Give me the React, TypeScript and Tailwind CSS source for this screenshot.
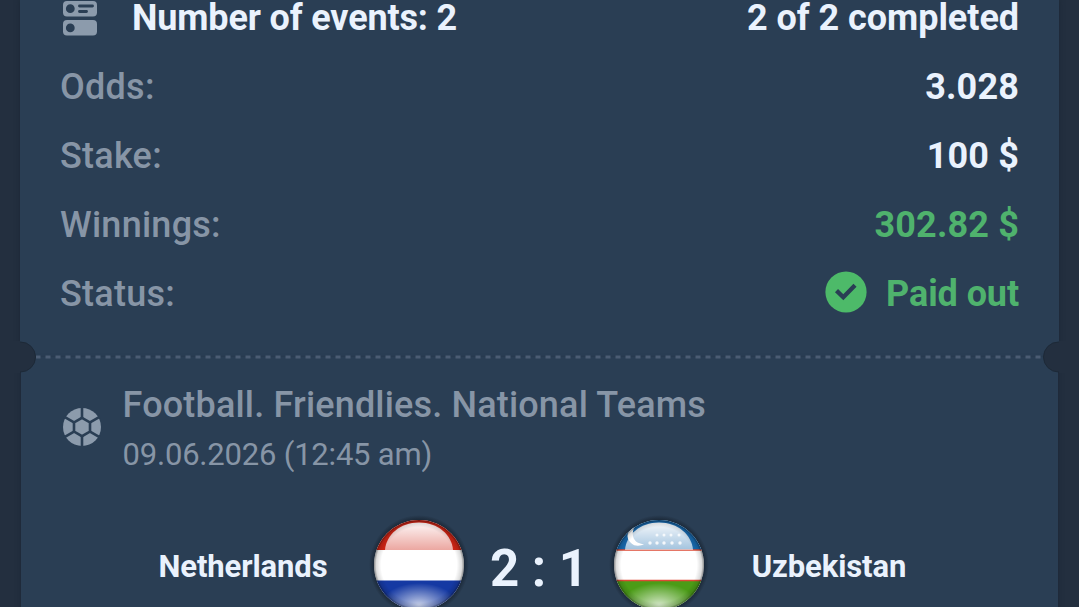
import type { ReactNode } from "react";

function EventsIcon() {
  return (
    <svg viewBox="0 0 36 36" className="h-9 w-9 shrink-0" fill="#8c9bac">
      <path
        fillRule="evenodd"
        d="M5 1h26a4 4 0 0 1 4 4v7.500a4 4 0 0 1-4 4H5a4 4 0 0 1-4-4V5a4 4 0 0 1 4-4ZM8.300 4.300a4.400 4.400 0 1 0 0 8.800a4.400 4.400 0 0 0 0-8.800ZM17.500 4.500a1.450 1.450 0 0 0 0 2.900h13a1.450 1.450 0 0 0 0-2.900ZM17.500 10a1.450 1.450 0 0 0 0 2.900h7a1.450 1.450 0 0 0 0-2.900Z"
      />
      <path
        fillRule="evenodd"
        d="M5 20h26a4 4 0 0 1 4 4v7.500a4 4 0 0 1-4 4H5a4 4 0 0 1-4-4V24a4 4 0 0 1 4-4ZM8.300 23.500a4.400 4.400 0 1 0 0 8.800a4.400 4.400 0 0 0 0-8.800Z"
      />
    </svg>
  );
}

function BallIcon() {
  return (
    <svg viewBox="-19 -19 38 38" className="mb-[5px] h-[38px] w-[38px] shrink-0">
      <circle r="19" fill="#8c9bac" />
      <g stroke="#2a3e54" strokeWidth="2.600" fill="none">
        <path d="M0-9.200 8-4.600V4.600L0 9.200-8 4.600V-4.600Z" />
        <path d="M0-9V-20M0 9V20M8-4.600 18-10.400M8 4.600 18 10.400M-8 4.600-18 10.400M-8-4.600-18-10.400" />
      </g>
    </svg>
  );
}

function PaidIcon() {
  return (
    <svg viewBox="0 0 42 42" className="mb-[4px] h-[42px] w-[42px] shrink-0">
      <circle cx="21" cy="21" r="20.600" fill="#4dba69" />
      <path d="m11.500 19.600 6.800 6.700L30 14.200" fill="none" stroke="#2a3e54" strokeWidth="4.300" />
    </svg>
  );
}

function Flag({ country }: { country: "nl" | "uz" }) {
  const nl = country === "nl";
  return (
    <svg viewBox="-50 -50 100 100" className="h-[100px] w-[100px] shrink-0">
      <defs>
        <clipPath id={`${country}-clip`}>
          <circle r="45" />
        </clipPath>
        <radialGradient id={`${country}-shadow`}>
          <stop offset="0.86" stopColor="#111a25" stopOpacity="0.8" />
          <stop offset="1" stopColor="#111a25" stopOpacity="0" />
        </radialGradient>
        <linearGradient id={`${country}-gloss`} x1="0" y1="0" x2="0" y2="1">
          <stop offset="0" stopColor="#fff" stopOpacity="0.96" />
          <stop offset="1" stopColor="#fff" stopOpacity="0.6" />
        </linearGradient>
        <radialGradient id={`${country}-glow`}>
          <stop offset="0" stopColor="#fff" stopOpacity="0.75" />
          <stop offset="1" stopColor="#fff" stopOpacity="0" />
        </radialGradient>
        <radialGradient id={`${country}-rim`} gradientUnits="userSpaceOnUse" cx="0" cy="0" r="45">
          <stop offset="0.84" stopColor="#000" stopOpacity="0" />
          <stop offset="0.95" stopColor="#000" stopOpacity="0.14" />
          <stop offset="1" stopColor="#000" stopOpacity="0.46" />
        </radialGradient>
      </defs>
      <circle r="50" fill={`url(#${country}-shadow)`} />
      <g clipPath={`url(#${country}-clip)`}>
        <rect x="-45" y="-45" width="90" height="90" fill="#fff" />
        <rect x="-45" y="-45" width="90" height="30" fill={nl ? "#cf2414" : "#1769ae"} />
        <rect x="-45" y="15.500" width="90" height="30" fill={nl ? "#1539a3" : "#4b9c17"} />
        <ellipse cy="40" rx="38" ry="22" fill={`url(#${country}-glow)`} />
        {!nl && <path d="M-45-15H45M-45 15.500H45" stroke="#dd4935" strokeWidth="1.300" />}
        <path d="M-34-15C-33-30-19-42.500 0-42.500S33-30 34-15Z" fill={`url(#${country}-gloss)`} />
        {!nl && (
          <g fill="#fff">
            <path d="M-24-39C-32-35-34-28-28-22C-24-18-18-19-15-21C-25-21-29-30-24-39Z" />
            {[-2, 5, 12, 20].map((x) => (
              <circle key={x} cx={x} cy="-30" r="1.500" opacity="0.8" />
            ))}
            {[-9, -2, 5, 13, 21].map((x) => (
              <circle key={x} cx={x} cy="-22" r="1.700" opacity="0.85" />
            ))}
          </g>
        )}
        <circle r="45" fill={`url(#${country}-rim)`} />
      </g>
    </svg>
  );
}

function Row({ label, children }: { label: string; children: ReactNode }) {
  return (
    <div className="flex h-[69px] items-center justify-between">
      <span className="font-medium tracking-[0.250px] text-[#8795a6]">{label}</span>
      {children}
    </div>
  );
}

export default function App() {
  return (
    <div className="h-[607px] w-[1079px] overflow-hidden bg-[#232f3f] font-['Roboto',sans-serif] text-[36px] leading-none text-[#eaf2fd]">
      <div className="mr-5 ml-5 h-[357px] bg-[#2a3e54] pr-10 pl-10 shadow-[0_0_5px_#1b2735]">
        <div className="mb-4 flex h-9 items-center justify-between font-bold">
          <div className="flex items-center gap-[34px] pl-[2px]">
            <EventsIcon />
            <span className="tracking-[-0.150px]">Number of events: 2</span>
          </div>
          <span className="tracking-[-0.050px]">2 of 2 completed</span>
        </div>
        <Row label="Odds:">
          <span className="font-bold tracking-[0.150px]">3.028</span>
        </Row>
        <Row label="Stake:">
          <span className="font-bold tracking-[0.150px]">100 $</span>
        </Row>
        <Row label="Winnings:">
          <span className="font-bold tracking-[0.150px] text-[#4fb26d]">302.82 $</span>
        </Row>
        <Row label="Status:">
          <div className="flex items-center gap-[19.500px] font-bold text-[#4fb26d]">
            <PaidIcon />
            <span className="tracking-[-0.100px]">Paid out</span>
          </div>
        </Row>
      </div>
      <div className="relative ml-[21px] h-[250px] w-[1037px] bg-[#2a3e54] shadow-[0_3px_5px_#1b2735]">
        <svg className="absolute -top-4 -left-[21px] h-8 w-[1079px]" viewBox="0 0 1079 32">
          <path d="M36 16H1043" stroke="#4b5c73" strokeWidth="3" strokeDasharray="5 5" strokeDashoffset="0.500" />
          <circle cx="20.500" cy="16" r="15" fill="#232f3f" stroke="#1d2937" />
          <circle cx="1058.500" cy="16" r="15" fill="#232f3f" stroke="#1d2937" />
          <path d="M0 0H20V32H0ZM1059 0H1079V32H1059Z" fill="#232f3f" />
        </svg>
        <div className="flex items-center gap-[21.500px] pt-[27px] pl-[42px] text-[#8795a6]">
          <BallIcon />
          <div>
            <div className="h-[42px] font-medium leading-[42px] tracking-[0.170px]">Football. Friendlies. National Teams</div>
            <div className="mt-[9px] h-10 text-[31px] leading-10 tracking-[-0.200px]">09.06.2026 (12:45 am)</div>
          </div>
        </div>
        <div className="mt-10 flex h-[100px] items-center font-bold">
          <div className="ml-[100px] w-[244px] pt-[3px] text-center text-[31px] tracking-[-0.100px]">Netherlands</div>
          <div className="ml-[4px] flex items-center">
            <Flag country="nl" />
            <div className="w-[140px] pt-[6px] text-center text-[51px] whitespace-pre">2 : 1</div>
            <Flag country="uz" />
          </div>
          <div className="w-[240px] pt-[3px] text-center text-[31px] tracking-[-0.100px]">Uzbekistan</div>
        </div>
      </div>
    </div>
  );
}
